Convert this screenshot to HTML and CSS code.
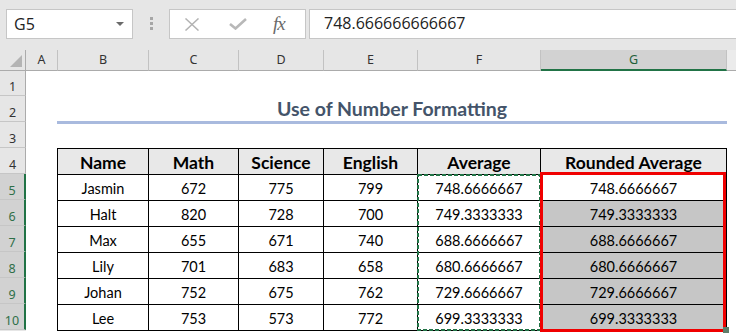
FILE: index.html
```html
<!DOCTYPE html>
<html lang="en">
<head>
  <meta charset="UTF-8" />
  <title>Use of Number Formatting</title>
  <link rel="stylesheet" href="styles.css">
</head>
<body>

<div class="formula-bar">
  <div class="name-box">
    <span class="cell-ref">G5</span>
    <span class="caret"></span>
  </div>
  <div class="grip"><i></i><i></i><i></i></div>
  <div class="fn-box">
    <svg class="icon-cancel" width="16" height="13" viewBox="0 0 16 13"><path d="M1.5 0.5 L14.5 12.5 M14.5 0.5 L1.5 12.5" /></svg>
    <svg class="icon-enter" width="18" height="12" viewBox="0 0 18 12"><path d="M1 6 L6.5 10.5 L17 1" /></svg>
    <span class="fx">fx</span>
  </div>
  <div class="formula">748.666666666667</div>
</div>

<div class="col-heads">
  <div class="corner"><span class="corner-tri"></span></div>
  <div class="col-head col-a">A</div>
  <div class="col-head col-b">B</div>
  <div class="col-head col-c">C</div>
  <div class="col-head col-d">D</div>
  <div class="col-head col-e">E</div>
  <div class="col-head col-f">F</div>
  <div class="col-head col-g selected">G</div>
  <div class="col-rest"></div>
</div>

<div class="sheet">
  <div class="row-heads">
    <div class="row-head">1</div>
    <div class="row-head">2</div>
    <div class="row-head">3</div>
    <div class="row-head">4</div>
    <div class="row-head selected">5</div>
    <div class="row-head selected">6</div>
    <div class="row-head selected">7</div>
    <div class="row-head selected">8</div>
    <div class="row-head selected">9</div>
    <div class="row-head selected">10</div>
  </div>

  <div class="cells">
    <div class="title">Use of Number Formatting</div>

    <div class="table-wrap">
      <div class="data-table">
        <div class="th">Name</div>
        <div class="th">Math</div>
        <div class="th">Science</div>
        <div class="th">English</div>
        <div class="th">Average</div>
        <div class="th">Rounded Average</div>

        <div>Jasmin</div><div>672</div><div>775</div><div>799</div><div>748.6666667</div><div>748.6666667</div>
        <div>Halt</div><div>820</div><div>728</div><div>700</div><div>749.3333333</div><div class="sel">749.3333333</div>
        <div>Max</div><div>655</div><div>671</div><div>740</div><div>688.6666667</div><div class="sel">688.6666667</div>
        <div>Lily</div><div>701</div><div>683</div><div>658</div><div>680.6666667</div><div class="sel">680.6666667</div>
        <div>Johan</div><div>752</div><div>675</div><div>762</div><div>729.6666667</div><div class="sel">729.6666667</div>
        <div>Lee</div><div>753</div><div>573</div><div>772</div><div>699.3333333</div><div class="sel">699.3333333</div>
      </div>

      <!-- copy marquee around F5:F10 -->
      <svg class="marquee" width="124" height="157" viewBox="0 0 124 157">
        <rect x="1" y="1" width="122" height="155" />
      </svg>
      <!-- highlight box around G5:G10 -->
      <div class="highlight"></div>
      <div class="fill-handle"></div>
    </div>
  </div>
</div>

</body>
</html>
```

FILE: styles.css
```css
body {
  margin: 0;
  width: 736px;
  height: 335px;
  overflow: hidden;
  background: #fff;
  font-family: "Noto Sans", sans-serif;
}

/* formula bar */
.formula-bar {
  height: 50px;
  box-sizing: border-box;
  padding-top: 9px;
  background: #e6e6e6;
  display: flex;
  align-items: flex-start;
}

.name-box {
  margin-left: 6px;
  width: 127px;
  height: 30px;
  box-sizing: border-box;
  border: 1px solid #c6c6c6;
  background: #fff;
  display: flex;
  align-items: center;
  justify-content: space-between;
  padding: 0 8px 0 7px;
}

.cell-ref {
  font-family: "Open Sans", sans-serif;
  font-size: 16px;
  color: #222;
}

.caret {
  width: 0;
  height: 0;
  border-left: 4px solid transparent;
  border-right: 4px solid transparent;
  border-top: 4px solid #6a6a6a;
}

.grip {
  margin: 8px 0 0 17px;
  display: flex;
  flex-direction: column;
  gap: 2px;
}

.grip i {
  width: 3px;
  height: 3px;
  background: #a6a6a6;
}

.fn-box {
  margin-left: 16px;
  width: 137px;
  height: 30px;
  box-sizing: border-box;
  border: 1px solid #c6c6c6;
  background: #fff;
  display: flex;
  align-items: center;
  padding-left: 14px;
}

.icon-cancel path {
  fill: none;
  stroke: #b3b3b3;
  stroke-width: 1.5;
}

.icon-enter {
  margin-left: 29px;
}

.icon-enter path {
  fill: none;
  stroke: #b8b8b8;
  stroke-width: 2.6;
}

.fx {
  margin-left: 26px;
  font-family: "Liberation Serif", serif;
  font-style: italic;
  font-size: 19px;
  color: #6a6a6a;
  letter-spacing: -1px;
}

.formula {
  margin-left: 3px;
  flex: 1;
  height: 30px;
  box-sizing: border-box;
  border: 1px solid #c6c6c6;
  border-right: none;
  background: #fff;
  padding-left: 14px;
  font-family: "Open Sans", sans-serif;
  font-size: 16px;
  line-height: 27px;
  color: #222;
}

/* column headers */
.col-heads {
  display: flex;
  height: 21px;
  background: #e6e6e6;
}

.corner,
.col-head {
  box-sizing: border-box;
  border-right: 1px solid #c2c2c2;
  border-bottom: 1px solid #ababab;
  font-size: 12.5px;
  line-height: 20px;
  text-align: center;
  color: #333;
}

.corner {
  width: 26px;
  border-right-color: #ababab;
  display: flex;
  align-items: flex-end;
  justify-content: flex-end;
  padding: 0 3px 3px 0;
}

.corner-tri {
  width: 0;
  height: 0;
  border-left: 12px solid transparent;
  border-bottom: 12px solid #b4b4b4;
}

.col-a { width: 32px; }
.col-b { width: 91px; }
.col-c { width: 90px; }
.col-d { width: 85px; }
.col-e { width: 94px; }
.col-f { width: 123px; }
.col-g { width: 186px; }

.col-head.selected {
  background: #d2d2d2;
  border-bottom: 2px solid #217346;
  color: #1f5f3a;
}

.col-rest {
  flex: 1;
  background: #ebebeb;
  border-bottom: 1px solid #ababab;
}

/* sheet body */
.sheet {
  display: flex;
}

.row-heads {
  width: 26px;
  background: #e6e6e6;
}

.row-head {
  height: 26px;
  box-sizing: border-box;
  border-bottom: 1px solid #c6c6c6;
  border-right: 1px solid #ababab;
  display: flex;
  align-items: flex-end;
  justify-content: center;
  font-size: 12.5px;
  color: #333;
}

.row-head:first-child {
  height: 25px;
}

.row-head.selected {
  background: #d2d2d2;
  border-right: 2px solid #217346;
  color: #2e6f48;
}

.cells {
  flex: 1;
  padding-left: 31px;
}

.title {
  width: 670px;
  margin-top: 25px;
  height: 28px;
  box-sizing: border-box;
  border-bottom: 3px solid #a9bade;
  text-align: center;
  font-family: Lato, sans-serif;
  font-weight: bold;
  font-size: 19.5px;
  line-height: 25px;
  color: #44546a;
}

.table-wrap {
  position: relative;
  margin-top: 24px;
  width: 670px;
}

.data-table {
  display: grid;
  grid-template-columns: 90px 89px 84px 93px 122px 185px;
  grid-auto-rows: 25px;
  gap: 1px;
  background: #000;
  border: 1px solid #000;
  width: fit-content;
  font-family: Lato, sans-serif;
  font-size: 14.5px;
  color: #000;
}

.data-table div {
  background: #fff;
  display: flex;
  align-items: center;
  justify-content: center;
  padding-top: 1px;
}

.data-table .th {
  background: #e8e8e8;
  font-weight: bold;
  font-size: 17.5px;
}

.data-table .sel {
  background: #c6c6c6;
}

.marquee {
  position: absolute;
  left: 360px;
  top: 26px;
}

.marquee rect {
  fill: none;
  stroke: #217346;
  stroke-width: 2;
  stroke-dasharray: 4 2;
}

.highlight {
  position: absolute;
  left: 483px;
  top: 24px;
  width: 186px;
  height: 160px;
  box-sizing: border-box;
  border: 3px solid #f00000;
}

.fill-handle {
  position: absolute;
  left: 666px;
  top: 179px;
  width: 6px;
  height: 6px;
  background: #5f7e6a;
}
```
